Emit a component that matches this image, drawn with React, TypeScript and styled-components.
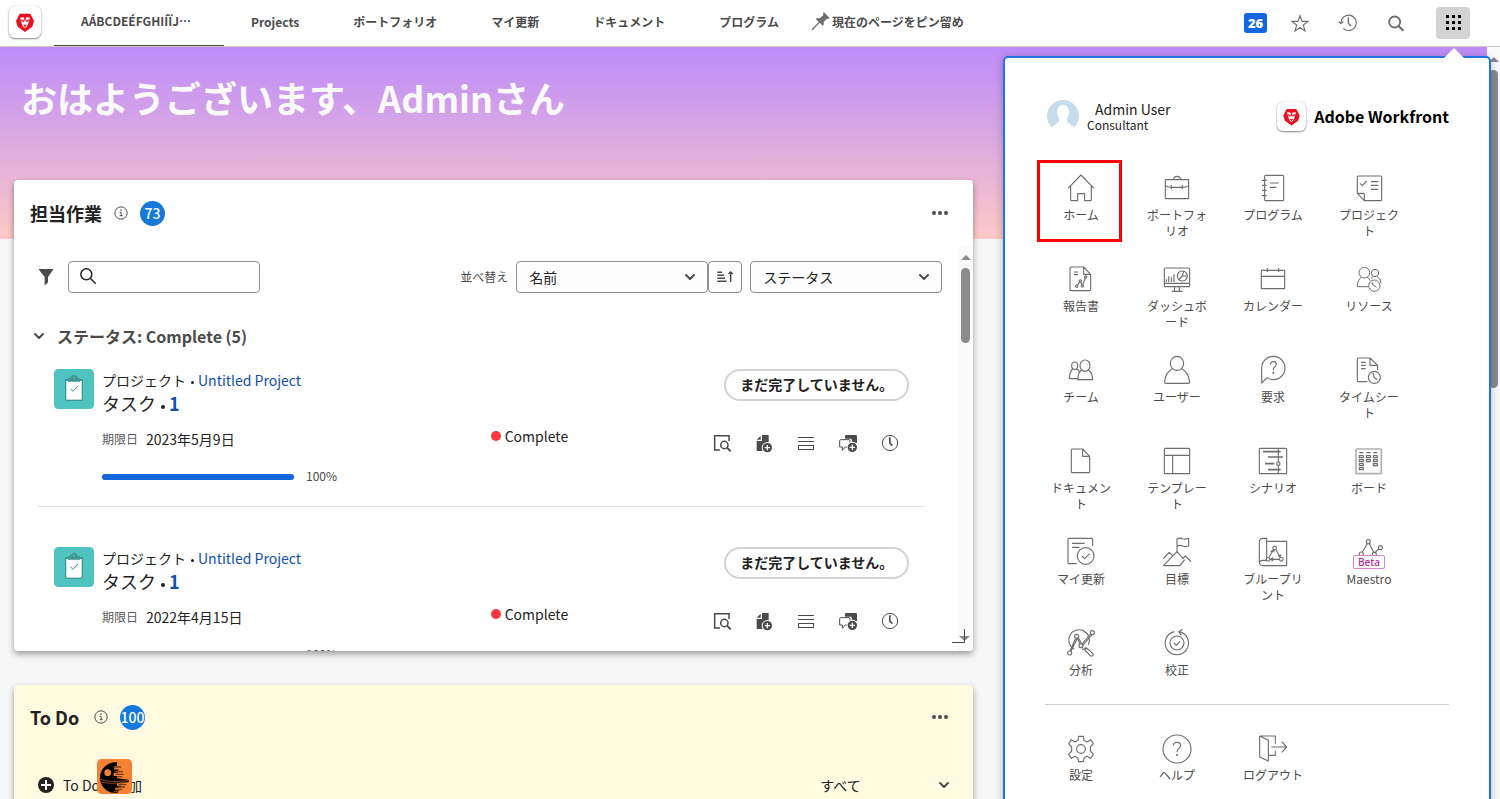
import React from "react";
import styled, { createGlobalStyle, css } from "styled-components";

const GlobalStyle = createGlobalStyle`
  *, *::before, *::after { box-sizing: border-box; }
  body {
    margin: 0;
    background: #f7f7f7;
    color: #222;
    font-family: "Noto Sans CJK JP", "Noto Sans", sans-serif;
    font-size: 14px;
  }
  button, input, select { font: inherit; color: inherit; }
  a { color: inherit; text-decoration: none; }
  h1, h2, h3, p, ul { margin: 0; padding: 0; }
  ul { list-style: none; }
`;

const Page = styled.div`
  height: 100vh;
  display: flex;
  flex-direction: column;
  overflow: hidden;
  position: relative;
`;

const IconButton = styled.button<{ $size?: number }>`
  width: ${(p) => p.$size ?? 20}px;
  height: ${(p) => p.$size ?? 20}px;
  padding: 0;
  border: 0;
  background: none;
  display: inline-flex;
  align-items: center;
  justify-content: center;
  flex: none;
  cursor: pointer;
`;

/* ---------- top bar ---------- */

const TopBar = styled.header`
  height: 47px;
  flex: none;
  display: flex;
  align-items: stretch;
  background: #fff;
  border-bottom: 1px solid #cbcbcb;
  padding: 0 30px 0 8px;
`;

const LogoTile = styled.a<{ $size: number }>`
  width: ${(p) => p.$size}px;
  height: ${(p) => p.$size}px;
  flex: none;
  display: flex;
  border-radius: 6px;
  background: #fff;
  box-shadow: 0 1px 2px rgba(0, 0, 0, 0.45), 0 0 1px rgba(0, 0, 0, 0.25);
`;

const Brand = styled.div`
  width: 46px;
  padding: 6px 0 0 1px;
`;

const Tabs = styled.nav`
  display: flex;
  flex: 1;
  min-width: 0;
`;

const Tab = styled.a<{ $active?: boolean }>`
  display: flex;
  align-items: center;
  padding: 0 27px 2px;
  font-size: 12px;
  font-weight: 700;
  color: #4b4b4b;
  white-space: nowrap;
  border-bottom: 1px solid ${(p) => (p.$active ? "#4b4b4b" : "transparent")};
  ${(p) =>
    p.$active &&
    css`
      width: 170px;
      padding-bottom: 4px;
    `}
`;

const PinLink = styled.a`
  display: flex;
  align-items: center;
  gap: 2px;
  padding: 0 5px 3px;
  font-size: 12px;
  font-weight: 700;
  color: #4b4b4b;
  white-space: nowrap;
`;

const Tools = styled.div`
  display: flex;
  align-items: center;
  gap: 28px;
  padding-bottom: 1px;
`;

const Counter = styled.a`
  width: 23px;
  height: 20px;
  border-radius: 3px;
  background: #1267e0;
  color: #fff;
  font: 800 13px/20px "Open Sans", "Noto Sans", sans-serif;
  text-align: center;
  margin-right: -5px;
`;

const AppsButton = styled(IconButton)`
  width: 34px;
  height: 32px;
  border-radius: 4px;
  background: #d3d3d3;
  margin-left: 2px;
`;

/* ---------- page body ---------- */

const Body = styled.div`
  flex: 1;
  min-height: 0;
  display: flex;
`;

const Content = styled.main`
  flex: 1;
  min-width: 0;
  overflow: hidden;
  background: linear-gradient(#bd8cfa, #fdc9c6) top / 100% 192px no-repeat;
`;

const Greeting = styled.h1`
  padding: 24px 21px 0;
  height: 133px;
  font-size: 36px;
  line-height: 52px;
  font-weight: 700;
  color: #fafafa;
`;

const Columns = styled.div`
  display: grid;
  grid-template-columns: 2fr 1fr;
  gap: 20px;
  padding: 0 14px;
`;

const Stack = styled.div`
  display: flex;
  flex-direction: column;
  gap: 34px;
`;

const Card = styled.section<{ $tone?: string }>`
  height: 471px;
  display: flex;
  flex-direction: column;
  overflow: hidden;
  border-radius: 4px;
  background: ${(p) => p.$tone ?? "#fff"};
  box-shadow: 0 3px 6px rgba(0, 0, 0, 0.38);
`;

const CardHeader = styled.header<{ $compact?: boolean }>`
  height: ${(p) => (p.$compact ? 64 : 66)}px;
  flex: none;
  display: flex;
  align-items: center;
  padding: 0 22px 0 16px;
`;

const CardTitle = styled.h2`
  min-width: 52px;
  font-size: 18px;
  line-height: 26px;
  font-weight: 700;
  color: #222;
  margin-right: 12px;
`;

const CountBadge = styled.span`
  width: 25px;
  height: 25px;
  margin-left: 12px;
  border-radius: 50%;
  background: #1479d8;
  color: #fff;
  font-size: 14px;
  line-height: 24px;
  font-weight: 500;
  display: flex;
  justify-content: center;
`;

const Spacer = styled.div`
  flex: 1;
`;

const CardBody = styled.div`
  flex: 1;
  min-height: 0;
  display: flex;
`;

const List = styled.div`
  flex: 1;
  min-width: 0;
  overflow: hidden;
  padding: 15px 16px 0 20px;
`;

const Toolbar = styled.div`
  display: flex;
  align-items: center;
  padding-left: 4px;
`;

const SearchBox = styled.label`
  width: 192px;
  height: 32px;
  margin-left: 14px;
  padding: 0 10px 2px;
  display: flex;
  align-items: center;
  gap: 8px;
  border: 1px solid #8e8e8e;
  border-radius: 4px;
  background: #fff;
`;

const SearchInput = styled.input`
  flex: 1;
  min-width: 0;
  border: 0;
  outline: 0;
  background: none;
  padding: 0;
`;

const FieldLabel = styled.label`
  font-size: 12px;
  color: #4b4b4b;
  margin-right: 8px;
  padding-bottom: 2px;
`;

const SelectWrap = styled.div<{ $bare?: boolean }>`
  width: ${(p) => (p.$bare ? 153 : 192)}px;
  height: 32px;
  display: grid;
  align-items: center;
  border: ${(p) => (p.$bare ? "0" : "1px solid #8e8e8e")};
  border-radius: 4px;
  background: ${(p) => (p.$bare ? "none" : "#fdfdfd")};

  & > * {
    grid-area: 1 / 1;
  }
  & > svg {
    justify-self: end;
    margin-right: 11px;
    pointer-events: none;
  }
`;

const Select = styled.select`
  appearance: none;
  width: 100%;
  height: 30px;
  padding: 0 32px 0 12px;
  border: 0;
  outline: 0;
  background: none;
  font-size: 14px;
`;

const SortButton = styled(IconButton)`
  width: 34px;
  height: 32px;
  border: 1px solid #8e8e8e;
  border-radius: 4px;
  background: #fdfdfd;
  margin-right: 8px;
`;

const GroupToggle = styled.button`
  display: flex;
  align-items: center;
  gap: 12px;
  height: 24px;
  margin: 31px 0 21px -1px;
  padding: 0;
  border: 0;
  background: none;
  font-size: 16px;
  line-height: 24px;
  font-weight: 700;
  color: #4b4b4b;
`;

const Task = styled.article`
  display: grid;
  grid-template-columns: 48px minmax(0, 16fr) minmax(0, 9fr) 200px;
  margin: 0 18px 40px 4px;
  padding: 0 15px 21px 16px;
  border-bottom: 1px solid #e1e1e1;
`;

const ProjectLine = styled.p`
  font-size: 14px;
  line-height: 22px;
  white-space: nowrap;
`;

const TaskLine = styled.h3`
  font-size: 18px;
  line-height: 24px;
  font-weight: 400;
`;

const Dot = styled.span<{ $size: number }>`
  display: inline-block;
  width: ${(p) => p.$size}px;
  height: ${(p) => p.$size}px;
  margin: 0 4px 0 5px;
  border-radius: 50%;
  background: #222;
  vertical-align: 2px;
`;

const BlueLink = styled.a<{ $strong?: boolean }>`
  color: #1150ad;
  font-weight: ${(p) => (p.$strong ? 700 : 400)};
`;

const DateLine = styled.p`
  display: flex;
  align-items: center;
  gap: 8px;
  margin-top: 14px;
  font-size: 14px;
  line-height: 20px;
`;

const Muted = styled.span`
  font-size: 12px;
  color: #5a5a5a;
`;

const ProgressRow = styled.div`
  display: flex;
  align-items: flex-start;
  gap: 12px;
  height: 16px;
  margin-top: 20px;
  font-size: 12px;
  line-height: 14px;
  color: #4b4b4b;
`;

const Track = styled.div`
  width: 192px;
  height: 6px;
  margin-top: 5px;
  border-radius: 3px;
  background: #d5d5d5;
`;

const Fill = styled.div`
  height: 100%;
  border-radius: 3px;
  background: #1267dc;
`;

const Status = styled.div`
  display: flex;
  align-items: center;
  gap: 4px;
  height: 20px;
  margin-top: 57px;
  font-size: 14px;
  line-height: 20px;

  &::before {
    content: "";
    width: 10px;
    height: 10px;
    border-radius: 50%;
    background: #ff3540;
  }
`;

const Actions = styled.div`
  display: flex;
  flex-direction: column;
  align-items: flex-end;
  gap: 32px;
`;

const PillButton = styled.button`
  height: 32px;
  padding: 0 14px 2px;
  border: 2px solid #d3d3d3;
  border-radius: 16px;
  background: #fff;
  font-size: 14px;
  line-height: 20px;
  font-weight: 700;
  white-space: nowrap;
`;

const ActionIcons = styled.div`
  display: flex;
  gap: 22px;
  margin-right: 9px;
`;

const Scrollbar = styled.div<{ $width: number; $top: number }>`
  width: ${(p) => p.$width}px;
  flex: none;
  display: flex;
  flex-direction: column;
  align-items: center;
  padding-top: ${(p) => p.$top}px;
  gap: 8px;
  background: #fafafa;
`;

const ScrollUp = styled.div`
  border: 5px solid transparent;
  border-top: 0;
  border-bottom: 5px solid #8a8a8a;
`;

const Thumb = styled.div<{ $length: number }>`
  width: 9px;
  height: ${(p) => p.$length}px;
  border-radius: 5px;
  background: #8b8b8b;
`;

const CardFrame = styled.div`
  position: relative;
`;

const ResizeGrip = styled.svg`
  position: absolute;
  right: 1px;
  bottom: 6px;
`;

const TodoRow = styled.div`
  display: flex;
  align-items: center;
  height: 32px;
  margin: 20px 12px 0 24px;
`;

const AddTodo = styled.button`
  display: flex;
  align-items: center;
  gap: 9px;
  padding: 0;
  border: 0;
  background: none;
  font-size: 14px;
  line-height: 20px;
`;

const FloatingIcon = styled.svg`
  position: absolute;
  left: 97px;
  top: 759px;
`;

/* ---------- main menu ---------- */

const Menu = styled.aside`
  position: absolute;
  top: 56px;
  right: 9px;
  width: 488px;
  min-height: calc(100% - 40px);
  padding: 41px 40px 40px 28px;
  border: 2px solid #1f74e0;
  border-radius: 5px;
  background: #fff;
  box-shadow: 0 2px 10px rgba(0, 0, 0, 0.25);
`;

const Caret = styled.svg`
  position: absolute;
  top: -11px;
  right: 24px;
`;

const MenuHeader = styled.div`
  display: flex;
  align-items: center;
  height: 34px;
  margin: 0 0 27px;
  padding-left: 14px;
`;

const UserText = styled.div`
  display: flex;
  flex-direction: column;
  padding: 2px 0 0 8px;
  font-size: 14px;
  line-height: 16px;
  color: #222;

  span:first-child {
    padding-left: 8px;
  }
  span:last-child {
    font-size: 12px;
  }
`;

const Product = styled.div`
  display: flex;
  align-items: center;
  gap: 8px;
  font-size: 16px;
  line-height: 24px;
  font-weight: 700;
  color: #000;
`;

const MenuGrid = styled.ul`
  display: grid;
  grid-template-columns: repeat(4, 96px);
  grid-auto-rows: 91px;
`;

const MenuCell = styled.li<{ $marked?: boolean }>`
  position: relative;
  ${(p) =>
    p.$marked &&
    css`
      &::after {
        content: "";
        position: absolute;
        top: 0;
        left: 4px;
        width: 85px;
        height: 82px;
        border: 3px solid #f00;
      }
    `}
`;

const MenuLink = styled.a`
  display: flex;
  flex-direction: column;
  align-items: center;
  gap: 4px;
  padding: 13px 16px 0;
  font-size: 12px;
  line-height: 16px;
  color: #4b4b4b;
  text-align: center;
`;

const MenuLabel = styled.span`
  width: 64px;
  word-break: break-all;
  line-break: anywhere;
`;

const Beta = styled.span`
  position: absolute;
  left: 32px;
  top: 31px;
  width: 32px;
  height: 14px;
  border: 1px solid transparent;
  border-radius: 2px;
  background: linear-gradient(#fff, #fff) padding-box, linear-gradient(90deg, #f07db2, #c08cf0) border-box;
  color: #b8308f;
  font: 600 10px/12px "Open Sans", sans-serif;
`;

const Divider = styled.hr`
  margin: -2px 0 0 12px;
  border: 0;
  border-top: 1px solid #cfcfcf;
  width: 404px;
`;

const SecondGroup = styled.div`
  padding-top: 15px;
`;

/* ---------- drawings ---------- */

const Lion = ({ size }: { size: number }) => (
  <svg width={size} height={size} viewBox="0 0 96 96" aria-label="Workfront">
    <path d="M32 23H64L75 45L70 62L48 78L26 62L21 45Z" fill="#eb1021" />
    <path d="M33 35L42 34L48 37L54 34L63 35L60 44L57 55L53 63L48 66L43 63L39 55L36 44Z" fill="#fff" />
    <path d="M35 39L46 44L45 48L38 46ZM61 39L50 44L51 48L58 46ZM42 56H54L50 60V63H46V60ZM45 36H51L49 46H47Z" fill="#eb1021" />
  </svg>
);

const Chevron = ({ size = 12 }: { size?: number }) => (
  <svg width={size} height={size} viewBox="0 0 12 12" fill="none" stroke="#4b4b4b" strokeWidth="2" strokeLinecap="round" strokeLinejoin="round">
    <path d="M2 4L6 8L10 4" />
  </svg>
);

const Info = () => (
  <svg width="14" height="14" viewBox="0 0 42 42" fill="none" stroke="#4b4b4b" strokeWidth="3">
    <circle cx="21" cy="21" r="18.5" />
    <path d="M17 19H21.500V29M17 29H26" />
    <path d="M19 12.500H23" strokeWidth="4" />
  </svg>
);

const More = () => (
  <svg width="16" height="16" viewBox="0 0 16 16" fill="#4b4b4b">
    <circle cx="2" cy="8" r="2" />
    <circle cx="8" cy="8" r="2" />
    <circle cx="14" cy="8" r="2" />
  </svg>
);

const TaskTile = () => (
  <svg width="40" height="40" viewBox="0 0 120 120">
    <rect width="120" height="120" rx="13" fill="#4fc3bf" />
    <rect x="33" y="30" width="54" height="66" rx="4" fill="#3f9793" />
    <rect x="37" y="36" width="46" height="56" fill="#fff" />
    <path d="M42 38V30Q42 26 50 26Q51 18 60 18Q69 18 70 26Q78 26 78 30V38Z" fill="#3f9793" />
    <circle cx="60" cy="26" r="3" fill="#4fc3bf" />
    <path d="M49 59L57 67L72 51" fill="none" stroke="#3f9793" strokeWidth="3" />
  </svg>
);

type Glyph = { label: string; art: React.ReactNode };

const actionGlyphs: Glyph[] = [
  {
    label: "概要",
    art: (
      <g fill="none" stroke="#4b4b4b" strokeWidth="4.5">
        <path d="M24 51H8V8H51V24" />
        <circle cx="37" cy="36" r="11" />
        <path d="M45 44L56 55" strokeWidth="6" />
      </g>
    ),
  },
  {
    label: "ドキュメントを追加",
    art: (
      <g>
        <path d="M8 24H24V6H44V54H8ZM8 20L20 8V20Z" fill="#4b4b4b" />
        <circle cx="40" cy="44" r="17" fill="#fff" />
        <circle cx="40" cy="44" r="14" fill="#4b4b4b" />
        <path d="M32 44H48M40 36V52" stroke="#fff" strokeWidth="4" />
      </g>
    ),
  },
  {
    label: "詳細",
    art: (
      <g fill="none" stroke="#4b4b4b" strokeWidth="3">
        <path d="M6 13.500H54M6 25.500H54" />
        <rect x="7.500" y="37.500" width="45" height="12" />
      </g>
    ),
  },
  {
    label: "コメントを追加",
    art: (
      <g>
        <path d="M21 10Q21 6 25 6H54Q57 6 57 10V30H44L40 17H21Z" fill="#4b4b4b" />
        <path d="M5 23Q5 20 8 20H33Q36 20 36 23V42H22L13 52V42H5Z" fill="#fff" stroke="#4b4b4b" strokeWidth="3" />
        <circle cx="43" cy="43" r="17" fill="#fff" />
        <circle cx="43" cy="43" r="14" fill="#4b4b4b" />
        <path d="M35 43H51M43 35V51" stroke="#fff" strokeWidth="4" />
      </g>
    ),
  },
  {
    label: "時間",
    art: (
      <g fill="none" stroke="#4b4b4b">
        <circle cx="30" cy="30" r="23" strokeWidth="3" />
        <path d="M29.500 13V30L37 38" strokeWidth="5" />
      </g>
    ),
  },
];

type MenuEntry = Glyph & { marked?: boolean; beta?: boolean };

const menuEntries: MenuEntry[] = [
  {
    label: "ホーム",
    marked: true,
    art: <path d="M6 46L45 6L84 46M14 38V80Q14 83 17 83H35V62H56V83H73Q76 83 76 80V38" />,
  },
  {
    label: "ポートフォリオ",
    art: (
      <>
        <rect x="10" y="20" width="70" height="57" rx="2" />
        <path d="M34 20Q35 10 45 10Q55 10 57 20M10 38Q18 43 30 43H60Q72 43 80 38M28 36V48M61 36V48" />
      </>
    ),
  },
  {
    label: "プログラム",
    art: (
      <>
        <rect x="20" y="7" width="57" height="76" rx="3" />
        <path d="M12 22H26M12 37H26M12 52H26M12 68H26M36 30H62M36 43H55" />
      </>
    ),
  },
  {
    label: "プロジェクト",
    art: (
      <path d="M10 61V12Q10 9 13 9H80Q83 9 83 12V80Q83 83 80 83H31L10 61H28Q31 61 31 64V83M18 31L25 38L38 24M51 26H73M51 37H73M51 49H73" />
    ),
  },
  {
    label: "報告書",
    art: (
      <>
        <path d="M53 9H15Q12 9 12 12V77Q12 80 15 80H71Q74 80 74 77V31L53 9V31H74M24 24H36M24 32H36" />
        <path d="M34 64L42 52M44 54L48 62M50 62L58 42" />
        <circle cx="32" cy="67" r="3.500" />
        <circle cx="43" cy="51" r="3.500" />
        <circle cx="49" cy="66" r="3.500" />
        <circle cx="59" cy="39" r="3.500" />
      </>
    ),
  },
  {
    label: "ダッシュボード",
    art: (
      <>
        <rect x="7" y="12" width="76" height="56" rx="3" />
        <path d="M7 58H83M13 54V46M20 54V37M28 54V40M36 54V31M38 68L37 82M51 68L53 82M29 82H62" />
        <circle cx="61" cy="36" r="15" />
        <path d="M50 47L61 36L65 21M61 36H76" />
      </>
    ),
  },
  {
    label: "カレンダー",
    art: (
      <>
        <rect x="10" y="19" width="70" height="55" rx="2" />
        <path d="M10 37H80M28 12V24M62 12V24" />
      </>
    ),
  },
  {
    label: "リソース",
    art: (
      <g strokeWidth="3">
        <circle cx="31" cy="26" r="16" />
        <path d="M22 40Q11 47 10 68H43M40 40Q46 43 48 50" />
        <circle cx="63" cy="27" r="11" />
        <path d="M57 37L52 44M69 37Q80 42 81 58" />
        <circle cx="61" cy="65" r="17" fill="#fff" />
        <path d="M55 55V62L68 70" />
      </g>
    ),
  },
  {
    label: "チーム",
    art: (
      <>
        <ellipse cx="26" cy="32" rx="9" ry="11" />
        <path d="M20 42Q11 49 10 71H34M32 42Q38 45 40 50" />
        <ellipse cx="57" cy="32" rx="15" ry="17" />
        <path d="M47 45Q36 52 35 74H80Q79 52 67 45" />
      </>
    ),
  },
  {
    label: "ユーザー",
    art: (
      <>
        <ellipse cx="45" cy="25" rx="20" ry="21" />
        <path d="M31 41Q10 51 8 82Q8 85 11 85H79Q83 85 83 82Q80 51 59 41" />
      </>
    ),
  },
  {
    label: "要求",
    art: (
      <>
        <path d="M11 84V39A35 35 0 1 1 46 74Q36 74 28 68Z" />
        <path d="M37 29Q38 20 46 20Q55 20 55 28Q55 33 50 36Q46 39 46 45" />
        <circle cx="46" cy="53" r="1.500" />
      </>
    ),
  },
  {
    label: "タイムシート",
    art: (
      <>
        <path d="M40 80H13Q10 80 10 77V12Q10 9 13 9H48L71 31V46M48 9V31H71M21 22H35M21 31H35M21 41H35" />
        <circle cx="61" cy="67" r="18" />
        <path d="M57 54L60 67L70 74" />
      </>
    ),
  },
  {
    label: "ドキュメント",
    art: <path d="M50 9H19Q16 9 16 12V77Q16 80 19 80H68Q71 80 71 77V31L50 9V31H71" />,
  },
  {
    label: "テンプレート",
    art: (
      <>
        <rect x="7" y="7" width="76" height="76" rx="3" />
        <path d="M7 28H83M32 28V83" />
      </>
    ),
  },
  {
    label: "シナリオ",
    art: (
      <>
        <rect x="4" y="7" width="82" height="76" rx="3" />
        <path d="M61 7V48M61 58V83" />
        <path d="M15 17H68M30 33H75M21 53H49M30 71H68" strokeWidth="5" />
        <circle cx="61" cy="53" r="5" />
      </>
    ),
  },
  {
    label: "ボード",
    art: (
      <>
        <rect x="6" y="9" width="76" height="74" rx="2" stroke="#b0b0b0" strokeWidth="5" />
        <path d="M16 20H28M37 20H49M58 20H70" />
        <path d="M16 29H28V35H16ZM16 41H28V47H16ZM16 53H28V59H16ZM16 65H28V71H16ZM37 29H49V35H37ZM37 41H49V47H37ZM58 29H70V35H58ZM58 41H70V47H58ZM58 53H70V59H58Z" />
      </>
    ),
  },
  {
    label: "マイ更新",
    art: (
      <>
        <path d="M32 80H9Q6 80 6 77V7Q6 4 9 4H77Q80 4 80 7V26M18 19H56M18 31H40" />
        <circle cx="59" cy="57" r="25" />
        <path d="M48 57L56 65L71 50" />
      </>
    ),
  },
  {
    label: "目標",
    art: (
      <path d="M45 48V6Q54 1 62 5Q71 8 80 4V26Q71 31 62 27Q54 23 45 28M4 86H54L68 68M4 86L45 44L63 64L70 57L87 74M4 65L22 46L32 56" />
    ),
  },
  {
    label: "ブループリント",
    art: (
      <>
        <path d="M28 13H86V86H16Q4 86 4 74V16Q4 4 16 4H26V70H16Q5 70 4 78" />
        <circle cx="50" cy="33" r="5.500" />
        <circle cx="30" cy="67" r="5.500" />
        <circle cx="70" cy="67" r="5.500" />
        <path d="M46 39L33 61M54 39L67 61M36 67H64M38 44L47 38L48 46M61 56L66 60L69 52M45 62L38 67L45 72" />
      </>
    ),
  },
  {
    label: "Maestro",
    beta: true,
    art: (
      <>
        <circle cx="43" cy="14" r="6" />
        <circle cx="79" cy="32" r="6" />
        <path d="M40 20L25 45M46 20L60 47M74 36L62 48" />
        <circle cx="22" cy="51" r="6" />
        <circle cx="61" cy="52" r="6" />
      </>
    ),
  },
  {
    label: "分析",
    art: (
      <>
        <path d="M25 64A31 31 0 1 1 67 50M48 65Q56 63 61 58" />
        <path d="M56 66L62 60L80 76Q84 80 80 83Q76 86 73 83Z" />
        <circle cx="11" cy="75" r="6" />
        <circle cx="32" cy="25" r="6" />
        <circle cx="45" cy="53" r="6" />
        <circle cx="79" cy="14" r="6" />
        <path d="M12 69L29 31M15 70L33 32M34 31L42 48M37 29L47 47M48 48L74 17M50 52L78 20" />
      </>
    ),
  },
  {
    label: "校正",
    art: (
      <>
        <path d="M37 11A35 35 0 1 0 52 11M62 4L50 11L58 22" />
        <circle cx="45" cy="45" r="21" />
        <path d="M36 45L43 52L54 40" />
      </>
    ),
  },
];

const secondaryEntries: MenuEntry[] = [
  {
    label: "設定",
    art: (
      <>
        <path d="M38 10H52L54 22L63 27L74 20L82 32L73 42V54L82 64L74 76L63 70L54 75L52 86H38L36 75L27 70L16 76L8 64L17 54V42L8 32L16 20L27 27L36 22Z" />
        <circle cx="45" cy="48" r="13" />
      </>
    ),
  },
  {
    label: "ヘルプ",
    art: (
      <>
        <circle cx="45" cy="48" r="42" />
        <path d="M34 37Q35 28 45 28Q56 28 56 37Q56 43 50 47Q45 51 45 58" />
        <circle cx="45" cy="66" r="1.500" />
      </>
    ),
  },
  {
    label: "ログアウト",
    art: <path d="M5 9H52V32M5 9V72L31 84V22L5 9M31 67H52V54M40 42H85M71 26L86 42L71 58" />,
  },
];

const MenuList = ({ entries }: { entries: MenuEntry[] }) => (
  <MenuGrid>
    {entries.map((e) => (
      <MenuCell key={e.label} $marked={e.marked}>
        <MenuLink href="#">
          <svg width="30" height="30" viewBox="0 0 90 90" fill="none" stroke="#6e6e6e" strokeWidth="3.4" strokeLinejoin="round" overflow="visible">
            {e.art}
          </svg>
          {e.beta && <Beta>Beta</Beta>}
          <MenuLabel>{e.label}</MenuLabel>
        </MenuLink>
      </MenuCell>
    ))}
  </MenuGrid>
);

const TaskRow = ({ due, percent }: { due: string; percent: number }) => (
  <Task>
    <TaskTile />
    <div>
      <ProjectLine>
        プロジェクト
        <Dot $size={3} />
        <BlueLink href="#">Untitled Project</BlueLink>
      </ProjectLine>
      <TaskLine>
        タスク
        <Dot $size={4} />
        <BlueLink href="#" $strong>
          1
        </BlueLink>
      </TaskLine>
      <DateLine>
        <Muted>期限日</Muted>
        {due}
      </DateLine>
      <ProgressRow>
        <Track>
          <Fill style={{ width: `${percent}%` }} />
        </Track>
        {percent}%
      </ProgressRow>
    </div>
    <Status>Complete</Status>
    <Actions>
      <PillButton>まだ完了していません。</PillButton>
      <ActionIcons>
        {actionGlyphs.map((g) => (
          <IconButton key={g.label} aria-label={g.label}>
            <svg width="20" height="20" viewBox="0 0 60 60">
              {g.art}
            </svg>
          </IconButton>
        ))}
      </ActionIcons>
    </Actions>
  </Task>
);

export default function App() {
  return (
    <Page lang="ja">
      <GlobalStyle />
      <TopBar>
        <Brand>
          <LogoTile href="#" $size={32}>
            <Lion size={32} />
          </LogoTile>
        </Brand>
        <Tabs>
          <Tab href="#" $active>
            AÁBCDEÉFGHIÍÏJ⋯
          </Tab>
          <Tab href="#">Projects</Tab>
          <Tab href="#">ポートフォリオ</Tab>
          <Tab href="#">マイ更新</Tab>
          <Tab href="#">ドキュメント</Tab>
          <Tab href="#">プログラム</Tab>
          <PinLink href="#">
            <svg width="19" height="19" viewBox="0 0 57 57" fill="#6e6e6e">
              <path d="M39 1L56 18L52 21L48 20L38 30Q40 37 36 42L26 32L6 54L2 55L3 51L23 30L14 21Q20 16 27 19L37 9L36 4Z" />
            </svg>
            現在のページをピン留め
          </PinLink>
        </Tabs>
        <Tools>
          <Counter href="#">26</Counter>
          <IconButton aria-label="お気に入り">
            <svg width="20" height="20" viewBox="0 0 60 60" fill="none" stroke="#6e6e6e" strokeWidth="3.4">
              <path d="M30 8L36 25H54L40 36L45 54L30 43L15 54L20 36L6 25H24Z" />
            </svg>
          </IconButton>
          <IconButton aria-label="履歴">
            <svg width="20" height="20" viewBox="0 0 60 60" fill="none" stroke="#6e6e6e" strokeWidth="3.4">
              <path d="M9 30A23 23 0 1 1 16 46" />
              <path d="M2 26L9 32L16 25" />
              <path d="M31 13V31L39 39" strokeWidth="4" />
            </svg>
          </IconButton>
          <IconButton aria-label="検索">
            <svg width="20" height="20" viewBox="0 0 60 60" fill="none" stroke="#6e6e6e" strokeWidth="5.500">
              <circle cx="26" cy="27" r="16.500" />
              <path d="M37 38L52 53" strokeWidth="6.500" />
            </svg>
          </IconButton>
          <AppsButton aria-label="メインメニュー">
            <svg width="15" height="15" viewBox="0 0 15 15" fill="#000">
              <path d="M0 0h3v3h-3zM6 0h3v3h-3zM12 0h3v3h-3zM0 6h3v3h-3zM6 6h3v3h-3zM12 6h3v3h-3zM0 12h3v3h-3zM6 12h3v3h-3zM12 12h3v3h-3z" />
            </svg>
          </AppsButton>
        </Tools>
      </TopBar>

      <Body>
        <Content>
          <Greeting>おはようございます、Adminさん</Greeting>
          <Columns>
            <Stack>
              <CardFrame>
                <Card>
                  <CardHeader>
                    <CardTitle>担当作業</CardTitle>
                    <Info />
                    <CountBadge>73</CountBadge>
                    <Spacer />
                    <IconButton $size={22} aria-label="その他">
                      <More />
                    </IconButton>
                  </CardHeader>
                  <CardBody>
                    <List>
                      <Toolbar>
                        <IconButton $size={16} aria-label="フィルター">
                          <svg width="16" height="18" viewBox="0 0 48 54" fill="#4b4b4b">
                            <path d="M1 3H47L30 27V43L20 53V27Z" />
                          </svg>
                        </IconButton>
                        <SearchBox>
                          <svg width="18" height="18" viewBox="0 0 54 54" fill="none" stroke="#222" strokeWidth="4.500">
                            <circle cx="22" cy="22" r="16.500" />
                            <path d="M34 34L50 50" />
                          </svg>
                          <SearchInput type="text" aria-label="検索" />
                        </SearchBox>
                        <Spacer />
                        <FieldLabel htmlFor="sort">並べ替え</FieldLabel>
                        <SelectWrap>
                          <Select id="sort">
                            <option>名前</option>
                          </Select>
                          <Chevron />
                        </SelectWrap>
                        <SortButton aria-label="並び順">
                          <svg width="16" height="12" viewBox="0 0 48 36" fill="none" stroke="#4b4b4b" strokeWidth="4.500">
                            <path d="M1 4H15M1 13H21M1 22H24M1 31H29M41 33V3M35 9L41 3L47 9" />
                          </svg>
                        </SortButton>
                        <SelectWrap>
                          <Select aria-label="グループ">
                            <option>ステータス</option>
                          </Select>
                          <Chevron />
                        </SelectWrap>
                      </Toolbar>
                      <GroupToggle>
                        <Chevron />
                        ステータス: Complete (5)
                      </GroupToggle>
                      <TaskRow due="2023年5月9日" percent={100} />
                      <TaskRow due="2022年4月15日" percent={100} />
                    </List>
                    <Scrollbar $width={15} $top={9}>
                      <ScrollUp />
                      <Thumb $length={75} />
                    </Scrollbar>
                  </CardBody>
                </Card>
                <ResizeGrip width="20" height="16" viewBox="0 0 20 16" aria-hidden="true">
                  <path d="M7 7H18L12.500 12Z" fill="#8a8a8a" />
                  <path d="M12.500 0V13.500H-2" fill="none" stroke="#4b4b4b" />
                </ResizeGrip>
              </CardFrame>

              <Card $tone="#fffae0">
                <CardHeader $compact>
                  <CardTitle>To Do</CardTitle>
                  <Info />
                  <CountBadge>100</CountBadge>
                  <Spacer />
                  <IconButton $size={22} aria-label="その他">
                    <More />
                  </IconButton>
                </CardHeader>
                <TodoRow>
                  <AddTodo>
                    <svg width="16" height="16" viewBox="0 0 16 16">
                      <circle cx="8" cy="8" r="8" fill="#222" />
                      <path d="M3 8H13M8 3V13" stroke="#fff" strokeWidth="2" />
                    </svg>
                    To Doを追加
                  </AddTodo>
                  <Spacer />
                  <SelectWrap $bare>
                    <Select aria-label="表示">
                      <option>すべて</option>
                    </Select>
                    <Chevron />
                  </SelectWrap>
                </TodoRow>
              </Card>
            </Stack>
          </Columns>
        </Content>
        <Scrollbar $width={13} $top={10}>
          <ScrollUp />
          <Thumb $length={318} />
        </Scrollbar>
      </Body>

      <FloatingIcon width="35" height="35" viewBox="0 0 105 105" aria-hidden="true">
        <rect width="105" height="105" rx="14" fill="#f58233" />
        <path d="M60 9V20H52V33H62V41H50V51H60V58L95 62V69L78 73H60V80H72V86H55V94H66L62 101Q45 104 30 95Q12 82 9 62Q7 40 22 24Q38 9 60 9Z" fill="#000" />
        <path d="M50 24H72M54 32H66M52 38H78M56 46H80M60 53H76M64 77H88M62 84H84M58 91H76M50 98H64" stroke="#7a3f17" strokeWidth="4" />
        <circle cx="32" cy="41" r="10" fill="#f58233" />
        <path d="M10 62Q45 72 94 64M12 69Q45 77 88 69" fill="none" stroke="#c96a28" strokeWidth="2" />
      </FloatingIcon>

      <Menu>
        <Caret width="22" height="13" viewBox="0 0 22 13" aria-hidden="true">
          <path d="M0 12V13H22V12L11 1Z" fill="#fff" />
        </Caret>
        <MenuHeader>
          <svg width="32" height="32" viewBox="0 0 96 96" aria-label="Admin User">
            <path d="M14 82A48 48 0 1 1 82 82L66 70Q58 66 60 56Q68 44 66 32Q62 14 48 14Q34 14 30 32Q29 44 36 56Q38 66 30 70Z" fill="#c4dceb" />
          </svg>
          <UserText>
            <span>Admin User</span>
            <span>Consultant</span>
          </UserText>
          <Spacer />
          <Product>
            <LogoTile href="#" $size={29}>
              <Lion size={29} />
            </LogoTile>
            Adobe Workfront
          </Product>
        </MenuHeader>
        <MenuList entries={menuEntries} />
        <Divider />
        <SecondGroup>
          <MenuList entries={secondaryEntries} />
        </SecondGroup>
      </Menu>
    </Page>
  );
}
